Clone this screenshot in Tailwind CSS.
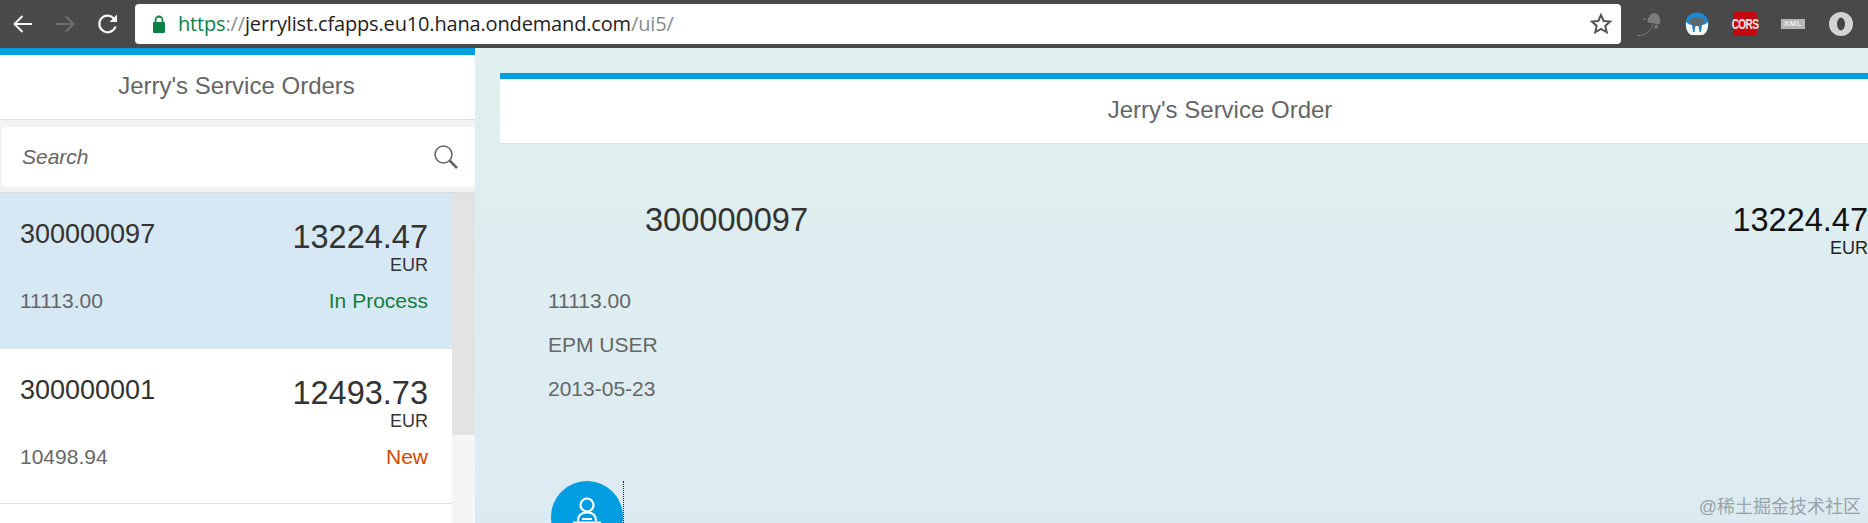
<!DOCTYPE html>
<html>
<head>
<meta charset="utf-8">
<script src="https://cdn.jsdelivr.net/npm/@tailwindcss/browser@4"></script>
</head>
<body class="overflow-hidden">
<div class="relative flex h-[523px] w-[1868px] flex-col overflow-hidden font-['Liberation_Sans','Noto_Sans_CJK_SC',sans-serif]">
  <!-- browser toolbar -->
  <header class="flex h-12 shrink-0 items-center bg-[#494949]">
    <div class="flex w-[135px] shrink-0 items-center">
      <svg class="ml-[12px] h-[22px] w-[22px]" viewBox="0 0 22 22" fill="none" stroke="#f4f4f4" stroke-width="2"><path d="M20 11H2.5M10.5 3l-8 8 8 8"/></svg>
      <svg class="ml-[20px] h-[22px] w-[22px]" viewBox="0 0 22 22" fill="none" stroke="#6f6f6f" stroke-width="2"><path d="M2 11h17.5M11.5 3l8 8-8 8"/></svg>
      <svg class="ml-[20px] h-[24px] w-[24px]" viewBox="0 0 24 24" fill="none" stroke="#f4f4f4" stroke-width="2.2"><path d="M19.5 14.5a8.3 8.3 0 1 1-1.9-8.3L20 8.6"/><path d="M21 2.5v7.5h-7.5z" fill="#f4f4f4" stroke="none"/></svg>
    </div>
    <div class="flex h-10 w-[1486px] items-center rounded-[4px] bg-white pl-[17px] pr-[7px] text-[20px] font-['Open_Sans',sans-serif]">
      <svg class="h-[20px] w-[14px] shrink-0" viewBox="0 0 14 20"><path d="M3.5 9V6a3.5 3.5 0 0 1 7 0v3" fill="none" stroke="#0b8043" stroke-width="1.8"/><rect x="1" y="8" width="12" height="11" rx="1.2" fill="#0b8043"/></svg>
      <span class="ml-[12px] tracking-[-0.16px] whitespace-nowrap"><span class="text-[#0b8043]">https</span><span class="text-[#8a8a8a]">://</span><span class="text-[#222]">jerrylist.cfapps.eu10.hana.ondemand.com</span><span class="text-[#8a8a8a]">/ui5/</span></span>
      <svg class="ml-auto mr-[1px] h-[24px] w-[24px]" viewBox="0 0 24 24" fill="none" stroke="#555" stroke-width="2"><path d="M12 3l2.7 6 6.4.6-4.800 4.300 1.400 6.400L12 17l-5.700 3.300 1.400-6.400-4.800-4.300 6.400-.6z"/></svg>
    </div>
    <div class="ml-[16px] flex items-center gap-[24px]">
      <svg class="h-6 w-6" viewBox="0 0 25 24" fill="none"><path d="M0 24c6 0 9-1 12-4 2-2 3-4 5-8" stroke="#7a7a7a" stroke-width="1"/><circle cx="18" cy="6" r="5.5" fill="#7b7b7b"/><circle cx="14" cy="8" r="3" fill="#7b7b7b"/><circle cx="21" cy="9" r="3.500" fill="#7b7b7b"/><circle cx="20" cy="15" r="2" fill="#777"/><circle cx="8" cy="7" r="1.2" fill="#777"/></svg>
      <svg class="h-6 w-6" viewBox="0 0 24 24"><circle cx="12" cy="12" r="11.500" fill="#1e88d2"/><path d="M4 9c2-5 14-5 16 0l-4 4-1.500 3h-5L8 13z" fill="#5f676b"/><path d="M1 10c-.5 6 1 11 5 13h12c4-2 5.500-7 5-13-2 2-4 3-6 3l-1 7h-1.500l-1-6h-3l-1 6H8l-1-7c-2 0-4-1-6-3z" fill="#f6f8f8"/></svg>
      <div class="flex h-6 w-6 items-center justify-center rounded-[3px] bg-[#c4080f] text-[10px] font-bold leading-none tracking-[-0.6px] text-[#f5e6e6]"><span class="scale-y-150">CORS</span></div>
      <div class="flex h-[10px] w-6 items-center justify-center bg-[#b5b5b5] text-[8px] font-bold tracking-[0.6px] text-[#eee]">XML</div>
      <svg class="h-6 w-6" viewBox="0 0 24 24"><circle cx="12" cy="12" r="12" fill="#d2d2d2"/><ellipse cx="12" cy="12" rx="4" ry="6.500" fill="#454545"/></svg>
    </div>
  </header>

  <div class="flex min-h-0 flex-1">
    <!-- master list -->
    <aside class="flex w-[475px] shrink-0 flex-col bg-[#f7f7f7]">
      <div class="h-[7px] shrink-0 bg-[#009de0]"></div>
      <div class="flex h-[65px] shrink-0 items-center justify-center border-b border-[#dcdcdc] bg-white pb-[3px] pr-[2px] text-[24px] text-[#666]">Jerry's Service Orders</div>
      <div class="h-[73px] shrink-0 bg-[#f2f2f2] pl-[2px] pt-[7px] shadow-[inset_0_-1px_0_#dcdce0]">
        <div class="flex h-[60px] w-full items-center justify-between rounded-l-[3px] bg-white pl-[20px] pr-[16px]">
          <span class="text-[21px] italic text-[#666]">Search</span>
          <svg class="h-[26px] w-[26px]" viewBox="0 0 26 26" fill="none" stroke="#666"><circle cx="10.5" cy="10.5" r="8.5" stroke-width="1.6"/><path d="M16.5 16.5l7.5 7.500" stroke-width="2.6"/></svg>
        </div>
      </div>
      <div class="flex min-h-0 flex-1">
        <div class="w-[452px] shrink-0 bg-white">
          <div class="h-[156px] bg-[#d6e8f3] pl-[20px] pr-[24px] pt-[25px]">
            <div class="flex items-start justify-between">
              <span class="text-[27px] leading-[32px] text-[#333]">300000097</span>
              <div class="flex flex-col items-end">
                <span class="text-[32.5px] leading-[38px] text-[#333]">13224.47</span>
                <span class="text-[18px] leading-[19px] text-[#333]">EUR</span>
              </div>
            </div>
            <div class="mt-[14px] flex justify-between text-[21px] leading-[24px]">
              <span class="text-[#666]">11113.00</span>
              <span class="text-[#107e3e]">In Process</span>
            </div>
          </div>
          <div class="h-[155px] border-b border-[#dedede] bg-white pl-[20px] pr-[24px] pt-[25px]">
            <div class="flex items-start justify-between">
              <span class="text-[27px] leading-[32px] text-[#333]">300000001</span>
              <div class="flex flex-col items-end">
                <span class="text-[32.5px] leading-[38px] text-[#333]">12493.73</span>
                <span class="text-[18px] leading-[19px] text-[#333]">EUR</span>
              </div>
            </div>
            <div class="mt-[14px] flex justify-between text-[21px] leading-[24px]">
              <span class="text-[#666]">10498.94</span>
              <span class="text-[#d14900]">New</span>
            </div>
          </div>
        </div>
        <div class="flex-1 bg-[#f5f5f5]"><div class="h-[242px] bg-[#e3e3e3]"></div></div>
      </div>
    </aside>

    <!-- detail -->
    <main class="min-w-0 flex-1 overflow-hidden bg-linear-to-b from-[#dff0ee] to-[#dcebf2] pl-[25px] pt-[25px]">
      <div class="mr-[-72px]">
        <div class="h-[6px] bg-[#009de0]"></div>
        <div class="flex h-[65px] items-center justify-center border-b border-[#dcdcdc] bg-white pb-[3px] text-[24px] text-[#666]">Jerry's Service Order</div>
      </div>
      <div class="flex items-start justify-between pl-[145px] pt-[57px]">
        <span class="text-[32.6px] leading-[38px] text-[#333]">300000097</span>
        <div class="flex flex-col items-end">
          <span class="text-[32.5px] leading-[38px] text-[#111]">13224.47</span>
          <span class="text-[18px] leading-[19px] text-[#222]">EUR</span>
        </div>
      </div>
      <div class="flex flex-col gap-[20px] pl-[48px] pt-[31px] text-[21px] leading-[24px] text-[#666]">
        <span>11113.00</span>
        <span>EPM USER</span>
        <span>2013-05-23</span>
      </div>
      <div class="ml-[51px] mt-[80px] flex items-start">
        <div class="flex h-[72px] w-[72px] shrink-0 justify-center rounded-full bg-[#009de0] pt-[15px]">
          <svg class="h-[36px] w-[36px]" viewBox="0 0 36 36" fill="none" stroke="#fff" stroke-width="2.2"><circle cx="18" cy="9" r="6.500"/><path d="M9 25c0-6 4-8.500 9-8.500s9 2.500 9 8.500"/><path d="M13 23h10M4 26.500h28"/></svg>
        </div>
        <div class="h-[60px] border-l border-dotted border-[#222]"></div>
      </div>
    </main>
  </div>
  <div class="absolute bottom-[7px] right-[7px] text-[18px] leading-none text-[#98a3a5]">@稀土掘金技术社区</div>
</div>
</body>
</html>
